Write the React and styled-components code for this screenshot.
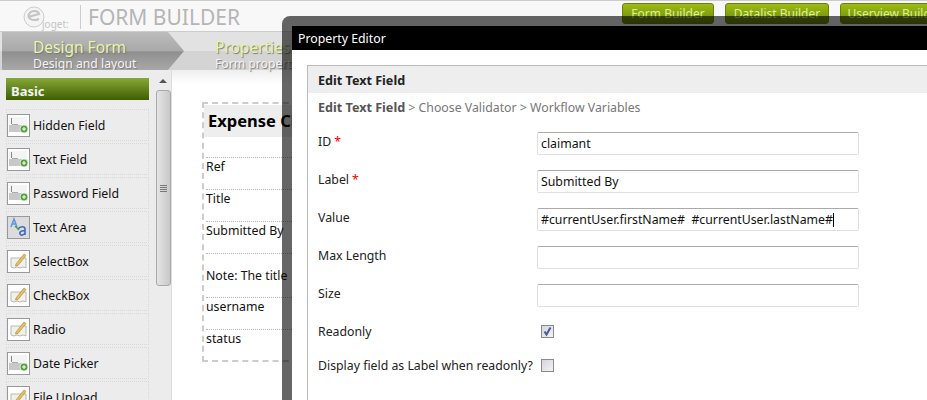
import React from 'react'
import styled, { createGlobalStyle } from 'styled-components'

const Global = createGlobalStyle`
  html, body { margin: 0; padding: 0; background: #fff; }
  body { font-family: "Noto Sans", "DejaVu Sans", sans-serif; font-size: 12.3px; color: #111; }
  * { box-sizing: border-box; }
`

const Page = styled.div`
  position: relative;
  width: 927px;
  height: 400px;
  overflow: hidden;
  background: #fff;
`
const Header = styled.header`
  height: 32px;
  display: flex;
  align-items: center;
  border-top: 1px solid #ccc;
  background: #f8f8f8;
  border-bottom: 1px solid #ccc;
`
const Logo = styled.div`
  width: 58px;
  height: 24px;
  margin: 2px 0 0 23px;
  display: flex;
  align-items: flex-end;
  color: #c4c4c4;
  font-size: 10px;
  line-height: 10px;
  border-right: 1px solid #ccc;
  span { margin: 0 0 0 -3px; }
`
const AppName = styled.div`
  margin: 2px 0 0 7px;
  font-size: 21px;
  color: #b5b5b5;
  white-space: nowrap;
`
const HeaderNav = styled.nav`
  margin-left: auto;
  display: flex;
  gap: 11px;
  width: 305px;
  flex-shrink: 0;
  margin-bottom: 5px;
`
const NavButton = styled.div`
  flex-shrink: 0;
  height: 21px;
  width: ${p => p.$w}px;
  border: 1px solid #6a7f10;
  border-radius: 3px;
  background: linear-gradient(#9dbb14, #6c8a06);
  color: #dff09a;
  font-size: 12px;
  line-height: 20px;
  text-align: center;
  white-space: nowrap;
`
const Steps = styled.div`
  height: 38px;
  display: flex;
  padding-left: 2px;
  background: linear-gradient(#e2e2e2 0 50%, #d4d4d4 50% 100%);
`
const Step = styled.div`
  position: relative;
  width: ${p => p.$w}px;
  flex-shrink: 0;
  padding: 6px 0 0 31px;
  background: ${p => p.$active
    ? 'linear-gradient(#bcbcbc, #a9a9a9 50%, #8f8f8f 52%, #a8a8a8)'
    : 'transparent'};
  clip-path: ${p => p.$active
    ? 'polygon(0 0, 166px 0, 182px 50%, 166px 100%, 0 100%)'
    : 'none'};
`
const StepTitle = styled.div`
  font-size: 15.5px;
  line-height: 19px;
  color: #e6f5a8;
  text-shadow: 1px 1px 1px #777;
  white-space: nowrap;
`
const StepSub = styled.div`
  font-size: 12.2px;
  line-height: 14px;
  color: #f4f4f4;
  text-shadow: 1px 1px 1px #777;
  white-space: nowrap;
`
const Body = styled.div`
  display: flex;
  height: 330px;
`
const Sidebar = styled.aside`
  width: 172px;
  flex-shrink: 0;
  display: flex;
  background: #ececec;
  border-right: 1px solid #ddd;
`
const Palette = styled.div`
  width: 155px;
  flex-shrink: 0;
  padding: 8px 6px 0 6px;
  display: flex;
  flex-direction: column;
  gap: 2px;
`
const PaletteTitle = styled.div`
  height: 22px;
  margin-bottom: 7px;
  padding: 2px 0 0 5px;
  background: linear-gradient(#87a838, #3f5e00);
  color: #f2f2f2;
  font-weight: 700;
  font-size: 13px;
  line-height: 22px;
`
const PaletteItem = styled.div`
  height: 32px;
  flex-shrink: 0;
  display: flex;
  align-items: center;
  gap: 3px;
  border: 1px dotted #d9d9d9;
`
const IconBox = styled.div`
  width: 23px;
  height: 23px;
  flex-shrink: 0;
  border: 1px solid #999;
  background: #fff;
  svg { display: block; }
`
const Scrollbar = styled.div`
  width: 16px;
  display: flex;
  flex-direction: column;
  align-items: center;
  padding-top: 9px;
  background: #ececec;
`
const ScrollArrow = styled.div`
  width: 0;
  height: 0;
  border-left: 4px solid transparent;
  border-right: 4px solid transparent;
  border-bottom: 4px solid #555;
`
const ScrollThumb = styled.div`
  width: 15px;
  height: 196px;
  margin-top: 7px;
  display: flex;
  flex-direction: column;
  align-items: center;
  justify-content: center;
  gap: 1px;
  border: 1px solid #aaa;
  border-radius: 3px;
  background: linear-gradient(90deg, #e4e4e4, #c8c8c8);
  i { display: block; width: 7px; height: 1px; background: #777; }
`
const Canvas = styled.main`
  flex: 1;
  padding: 32px 0 0 30px;
  background: linear-gradient(#eee, #fff 14px);
`
const FormBox = styled.div`
  width: 500px;
  height: 260px;
  padding: 1px 2px;
  border: 2px dashed #ccc;
  border-right: 0;
`
const FormTitle = styled.div`
  height: 32px;
  margin: 0 0 20px -2px;
  padding-left: 4px;
  background: #eee;
  font-weight: 700;
  font-size: 16.5px;
  line-height: 32px;
  color: #000;
`
const FormRow = styled.div`
  height: ${p => p.$h || 32}px;
  padding-top: ${p => p.$top || 0}px;
  border-top: 1px dotted #bbb;
  line-height: 17px;
`
const Modal = styled.div`
  position: absolute;
  left: 282px;
  top: 16px;
  width: 700px;
  height: 420px;
  padding: 10px;
  border-radius: 8px;
  background: rgba(0, 0, 0, 0.6);
`
const ModalTitle = styled.div`
  height: 24px;
  padding-left: 6px;
  background: #000;
  color: #fff;
  line-height: 26px;
`
const ModalBody = styled.div`
  height: 370px;
  padding: 15px;
  background: #fff;
`
const Panel = styled.div`
  height: 100%;
  border: 1px solid #bbb;
`
const PanelTitle = styled.div`
  height: 27px;
  padding-left: 10px;
  background: #eee;
  font-weight: 700;
  font-size: 12.6px;
  line-height: 29px;
  color: #222;
`
const Crumbs = styled.div`
  padding: 5px 0 0 10px;
  line-height: 19px;
  color: #777;
  b { color: #555; font-size: 12.6px; }
`
const Fields = styled.div`
  margin-top: 15px;
  padding-left: 10px;
  display: flex;
  flex-direction: column;
`
const FieldRow = styled.div`
  height: ${p => p.$h || 38}px;
  display: grid;
  grid-template-columns: 219px 322px;
  align-items: start;
`
const FieldLabel = styled.div`
  padding-top: 1px;
  line-height: 17px;
  white-space: nowrap;
  color: #222;
  em { color: #e00; font-style: normal; margin-left: 3px; }
`
const Input = styled.div`
  height: 23px;
  padding-left: 3px;
  border: 1px solid #dfe0e6;
  border-top-color: #aaa;
  border-radius: 2px;
  line-height: 21px;
  white-space: pre;
  color: #111;
`
const Caret = styled.span`
  display: inline-block;
  width: 1px;
  height: 14px;
  vertical-align: -3px;
  background: #000;
`
const Check = styled.div`
  width: 13px;
  height: 13px;
  margin: 3px 0 0 4px;
  border: 1px solid #8a8a8a;
  background: linear-gradient(135deg, #d4d4dc, #f4f4f4);
  svg { display: block; }
`

const FieldIcon = () => (
  <svg width="21" height="21" viewBox="0 0 21 21">
    <rect x="1" y="2" width="18" height="8" fill="#f4f4f4" />
    <rect x="1" y="10" width="18" height="7" fill="#c8c8c8" />
    <path d="M3.5 3v6" stroke="#888" fill="none" />
    <path d="M4 9.5h6" stroke="#aaa" fill="none" />
    <circle cx="16" cy="14" r="4" fill="#5a9a3a" stroke="#dfe" strokeWidth=".8" />
    <path d="M14 14h4M16 12v4" stroke="#fff" />
  </svg>
)
const AreaIcon = () => (
  <svg width="21" height="21" viewBox="0 0 21 21">
    <rect width="21" height="21" fill="#dcdcdc" />
    <path d="M3 10l3-8 3 8M4 7h4" stroke="#5a96e0" strokeWidth="1.5" fill="none" />
    <path d="M10 12c2-3 7-3 7 0v6M17 14c-3-1-6 1-5 3s4 1 5-1" stroke="#3a6cc0" strokeWidth="1.6" fill="none" />
    <path d="M7 9l4 4" stroke="#4aa04a" strokeWidth="1.5" />
  </svg>
)
const PencilIcon = () => (
  <svg width="21" height="21" viewBox="0 0 21 21">
    <path d="M3 7h15v10l-3-1-3 1-3-1-3 1-3-1z" fill="#f0f2ea" stroke="#b8b8b8" />
    <path d="M8 13L16 3l2 1.5-8 10-2.500 .5z" fill="#e8c060" stroke="#a88030" strokeWidth=".6" />
  </svg>
)
const LogoMark = () => (
  <svg width="22" height="24" viewBox="0 0 22 24">
    <circle cx="11" cy="12" r="10" fill="#f4f4f4" stroke="#ccc" />
    <path d="M5 12l11-3c-1-4-8-4-10 0s3 8 10 5" stroke="#c4c4c4" strokeWidth="2" fill="none" />
  </svg>
)

const icons = { field: FieldIcon, area: AreaIcon, pencil: PencilIcon }
const paletteItems = [
  ['Hidden Field', 'field'],
  ['Text Field', 'field'],
  ['Password Field', 'field'],
  ['Text Area', 'area'],
  ['SelectBox', 'pencil'],
  ['CheckBox', 'pencil'],
  ['Radio', 'pencil'],
  ['Date Picker', 'field'],
  ['File Upload', 'pencil'],
]

const App = () => {
  return (
    <Page>
      <Global />
      <Header>
        <Logo><LogoMark /><span>joget:</span></Logo>
        <AppName>FORM BUILDER</AppName>
        <HeaderNav>
          <NavButton $w={92}>Form Builder</NavButton>
          <NavButton $w={104}>Datalist Builder</NavButton>
          <NavButton $w={110}>Userview Builder</NavButton>
        </HeaderNav>
      </Header>
      <Steps>
        <Step $active $w={182}>
          <StepTitle>Design Form</StepTitle>
          <StepSub>Design and layout</StepSub>
        </Step>
        <Step $w={180}>
          <StepTitle>Properties</StepTitle>
          <StepSub>Form properties</StepSub>
        </Step>
      </Steps>
      <Body>
        <Sidebar>
          <Palette>
            <PaletteTitle>Basic</PaletteTitle>
            {paletteItems.map(([name, icon]) => {
              const Icon = icons[icon]
              return (
                <PaletteItem key={name}>
                  <IconBox><Icon /></IconBox>
                  {name}
                </PaletteItem>
              )
            })}
          </Palette>
          <Scrollbar>
            <ScrollArrow />
            <ScrollThumb><i /><i /><i /><i /></ScrollThumb>
          </Scrollbar>
        </Sidebar>
        <Canvas>
          <FormBox>
            <FormTitle>Expense Claim</FormTitle>
            <FormRow>Ref</FormRow>
            <FormRow>Title</FormRow>
            <FormRow>Submitted By</FormRow>
            <FormRow $h={44} $top={13}>Note: The title</FormRow>
            <FormRow>username</FormRow>
            <FormRow>status</FormRow>
          </FormBox>
        </Canvas>
      </Body>
      <Modal>
        <ModalTitle>Property Editor</ModalTitle>
        <ModalBody>
          <Panel>
            <PanelTitle>Edit Text Field</PanelTitle>
            <Crumbs><b>Edit Text Field</b> &gt; Choose Validator &gt; Workflow Variables</Crumbs>
            <Fields>
              <FieldRow>
                <FieldLabel>ID<em>*</em></FieldLabel>
                <Input>claimant</Input>
              </FieldRow>
              <FieldRow>
                <FieldLabel>Label<em>*</em></FieldLabel>
                <Input>Submitted By</Input>
              </FieldRow>
              <FieldRow>
                <FieldLabel>Value</FieldLabel>
                <Input>#currentUser.firstName#  #currentUser.lastName#<Caret /></Input>
              </FieldRow>
              <FieldRow>
                <FieldLabel>Max Length</FieldLabel>
                <Input />
              </FieldRow>
              <FieldRow>
                <FieldLabel>Size</FieldLabel>
                <Input />
              </FieldRow>
              <FieldRow $h={34}>
                <FieldLabel>Readonly</FieldLabel>
                <Check>
                  <svg width="11" height="11" viewBox="0 0 11 11">
                    <path d="M2.500 5.500l2 3 4-7" stroke="#4a5a9a" strokeWidth="2" fill="none" />
                  </svg>
                </Check>
              </FieldRow>
              <FieldRow>
                <FieldLabel>Display field as Label when readonly?</FieldLabel>
                <Check />
              </FieldRow>
            </Fields>
          </Panel>
        </ModalBody>
      </Modal>
    </Page>
  )
}

export default App
